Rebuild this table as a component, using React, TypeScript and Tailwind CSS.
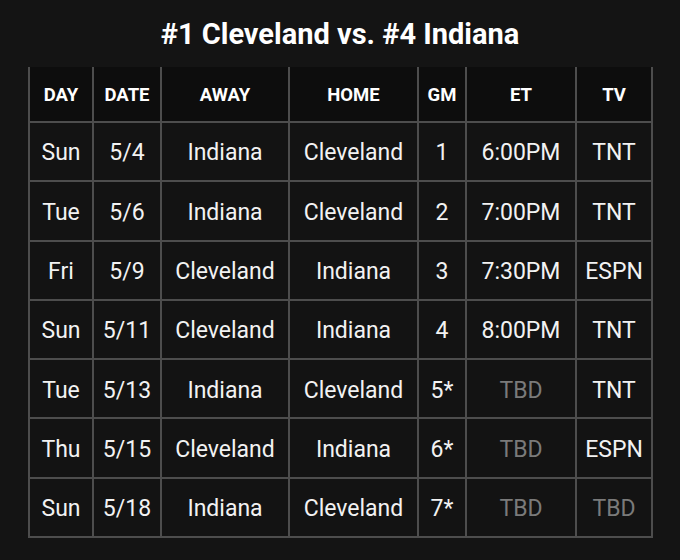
import React from 'react';

type Game = {
    day: string;
    date: string;
    away: string;
    home: string;
    gm: string;
    et: string;
    tv: string;
};

const games: Game[] = [
    { day: 'Sun', date: '5/4', away: 'Indiana', home: 'Cleveland', gm: '1', et: '6:00PM', tv: 'TNT' },
    { day: 'Tue', date: '5/6', away: 'Indiana', home: 'Cleveland', gm: '2', et: '7:00PM', tv: 'TNT' },
    { day: 'Fri', date: '5/9', away: 'Cleveland', home: 'Indiana', gm: '3', et: '7:30PM', tv: 'ESPN' },
    { day: 'Sun', date: '5/11', away: 'Cleveland', home: 'Indiana', gm: '4', et: '8:00PM', tv: 'TNT' },
    { day: 'Tue', date: '5/13', away: 'Indiana', home: 'Cleveland', gm: '5*', et: 'TBD', tv: 'TNT' },
    { day: 'Thu', date: '5/15', away: 'Cleveland', home: 'Indiana', gm: '6*', et: 'TBD', tv: 'ESPN' },
    { day: 'Sun', date: '5/18', away: 'Indiana', home: 'Cleveland', gm: '7*', et: 'TBD', tv: 'TBD' },
];

const headers = ['DAY', 'DATE', 'AWAY', 'HOME', 'GM', 'ET', 'TV'];
const widths = ['w-[64px]', 'w-[68px]', 'w-[128px]', 'w-[129px]', 'w-[48px]', 'w-[110px]', 'w-[76px]'];

const cellClass = (value: string) =>
    value === 'TBD' ? 'text-[#7a7a7a]' : 'text-[#f2f2f2]';

const App: React.FC = () => {
    return (
        <div className="w-[680px] h-[560px] bg-[#141414] font-['Roboto',sans-serif] flex flex-col items-center">
            {/* Title */}
            <h1 className="mt-[16px] h-[36px] text-[29px] leading-[36px] font-bold text-white">
                #1 Cleveland vs. #4 Indiana
            </h1>

            {/* Schedule */}
            <table className="mt-[15px] ml-[1px] border-collapse table-fixed">
                <thead>
                    <tr className="h-[55px] bg-[#0d0d0d]">
                        {headers.map((h, i) => (
                            <th
                                key={h}
                                className={`${widths[i]} pt-[4px] border-x-2 border-b-2 border-[#4d4d4d] text-[18.5px] font-bold text-white text-center`}
                            >
                                {h}
                            </th>
                        ))}
                    </tr>
                </thead>
                <tbody>
                    {games.map((g) => (
                        <tr key={g.date} className="h-[59.3px] bg-[#131313]">
                            {[g.day, g.date, g.away, g.home, g.gm, g.et, g.tv].map((v, i) => (
                                <td
                                    key={i}
                                    className={`pt-[4px] border-2 border-[#4d4d4d] text-[23px] text-center ${cellClass(v)}`}
                                >
                                    {v}
                                </td>
                            ))}
                        </tr>
                    ))}
                </tbody>
            </table>
        </div>
    );
};

export default App;
